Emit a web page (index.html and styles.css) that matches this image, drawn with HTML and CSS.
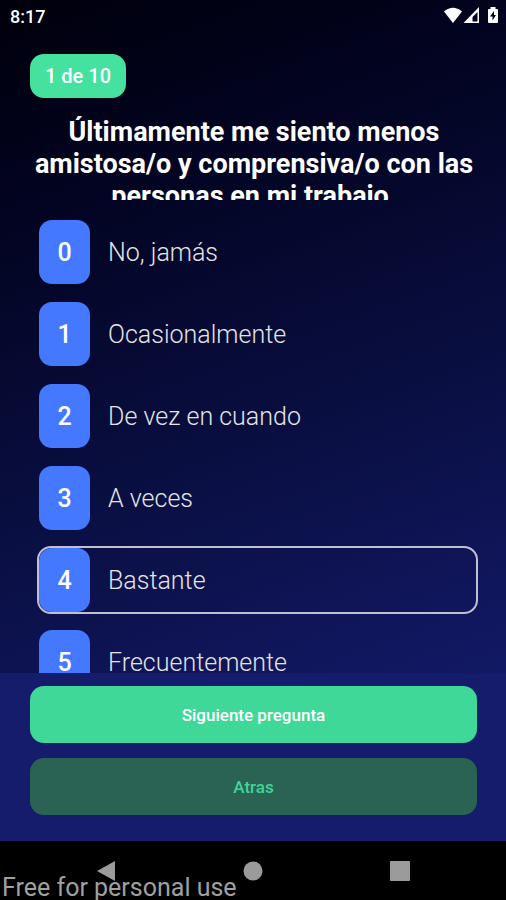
FILE: index.html
```html
<!DOCTYPE html>
<html lang="es">
<head>
<meta charset="utf-8">
<meta name="viewport" content="width=device-width, initial-scale=1">
<title>Cuestionario</title>
<link rel="stylesheet" href="styles.css">
</head>
<body>
<div class="app">
  <header class="status">
    <span>8:17</span>
    <svg class="status-icons" width="54" height="18" viewBox="0 0 54 18" aria-hidden="true">
      <path fill="#fff" d="M0 4.500Q9-3 18 4.500L9 16Z"/>
      <path fill="#fff" fill-rule="evenodd" d="M35 0V16H19.500ZM33.500 5L28.500 10V14.500H33.500Z"/>
      <path fill="#fff" fill-rule="evenodd" d="M46.500 0H51.500V2H53Q54 2 54 3V15Q54 16 53 16H45Q44 16 44 15V3Q44 2 45 2H46.500ZM50 4L46 9.500H48.500V13.500L52 8H50Z"/>
    </svg>
  </header>
  <main class="quiz">
    <span class="progress">1 de 10</span>
    <h1 class="question" id="question">Últimamente me siento menos amistosa/o y comprensiva/o con las personas en mi trabajo.</h1>
    <div class="options" role="radiogroup" aria-labelledby="question">
      <label class="option"><input type="radio" name="answer" value="0"><span class="score">0</span><span>No, jamás</span></label>
      <label class="option"><input type="radio" name="answer" value="1"><span class="score">1</span><span>Ocasionalmente</span></label>
      <label class="option"><input type="radio" name="answer" value="2"><span class="score">2</span><span>De vez en cuando</span></label>
      <label class="option"><input type="radio" name="answer" value="3"><span class="score">3</span><span>A veces</span></label>
      <label class="option"><input type="radio" name="answer" value="4" checked><span class="score">4</span><span>Bastante</span></label>
      <label class="option"><input type="radio" name="answer" value="5"><span class="score">5</span><span>Frecuentemente</span></label>
    </div>
  </main>
  <footer class="actions">
    <button type="button" class="button next">Siguiente pregunta</button>
    <button type="button" class="button back">Atras</button>
  </footer>
  <nav class="system-nav" aria-label="Sistema">
    <button type="button" aria-label="Volver"><svg width="20" height="20" viewBox="0 0 20 20"><path d="M19 0V20L1 10Z"/></svg></button>
    <button type="button" aria-label="Inicio"><svg width="20" height="20" viewBox="0 0 20 20"><circle cx="10" cy="10" r="9.500"/></svg></button>
    <button type="button" aria-label="Recientes"><svg width="20" height="20" viewBox="0 0 20 20"><rect width="20" height="20" rx="1"/></svg></button>
    <span class="watermark">Free for personal use</span>
  </nav>
</div>
</body>
</html>
```
FILE: styles.css
```css
* {
  box-sizing: border-box;
}

body {
  margin: 0;
  font-family: Roboto, "Liberation Sans", sans-serif;
  color: #fff;
  background: #000;
}

.app {
  display: flex;
  flex-direction: column;
  height: 100vh;
  overflow: hidden;
  background: linear-gradient(160deg, #00000c 0%, #02031e 18%, #090e40 48%, #141b6c 85%);
}

.status {
  display: flex;
  flex: none;
  justify-content: space-between;
  align-items: center;
  height: 32px;
  padding: 0 8px 0 10px;
  font-size: 18px;
  font-weight: 500;
}

.quiz {
  display: flex;
  flex: 1;
  flex-direction: column;
  min-height: 0;
  padding: 22px 28px 0 30px;
}

.progress {
  flex: none;
  align-self: flex-start;
  padding: 0 15px;
  border-radius: 14px;
  background: #44e19f;
  font-size: 20px;
  font-weight: 500;
  line-height: 44px;
}

.question {
  flex: none;
  height: 84px;
  margin: 18px 0;
  overflow: hidden;
  font-size: 27px;
  font-weight: 700;
  line-height: 32px;
  text-align: center;
}

.options {
  display: flex;
  flex: 1;
  flex-direction: column;
  gap: 14px;
  min-height: 0;
  padding-left: 7px;
  overflow: hidden;
}

.option {
  position: relative;
  display: flex;
  flex: none;
  align-items: flex-start;
  gap: 18px;
  height: 68px;
  border: 2px solid transparent;
  border-radius: 14px;
  color: #e4e4e4;
  font-size: 25px;
  font-weight: 300;
  line-height: 66px;
}

.option:has(:checked) {
  border-color: #c0c0d2;
}

.option input {
  position: absolute;
  opacity: 0;
}

.score {
  width: 51px;
  height: 64px;
  border-radius: 13px;
  background: #4479ff;
  color: #fff;
  font-weight: 500;
  text-align: center;
}

.actions {
  display: flex;
  flex: none;
  flex-direction: column;
  gap: 15px;
  padding: 13px 29px 26px 30px;
  background: #151c6c;
}

.button {
  height: 57px;
  border: 0;
  border-radius: 14px;
  font-family: inherit;
  font-size: 17px;
  font-weight: 500;
}

.next {
  background: #40d899;
  color: #fff;
}

.back {
  background: #2a6254;
  color: #3fd597;
}

.system-nav {
  position: relative;
  display: flex;
  flex: none;
  justify-content: space-around;
  align-items: center;
  height: 59px;
  padding: 0 33px;
  background: #000;
}

.system-nav button {
  display: flex;
  padding: 0;
  border: 0;
  background: none;
}

.system-nav svg {
  fill: #9b9b9b;
}

.watermark {
  position: absolute;
  left: 2px;
  bottom: -4px;
  color: #a0a0a0;
  font-size: 25px;
  line-height: 32px;
}
```
